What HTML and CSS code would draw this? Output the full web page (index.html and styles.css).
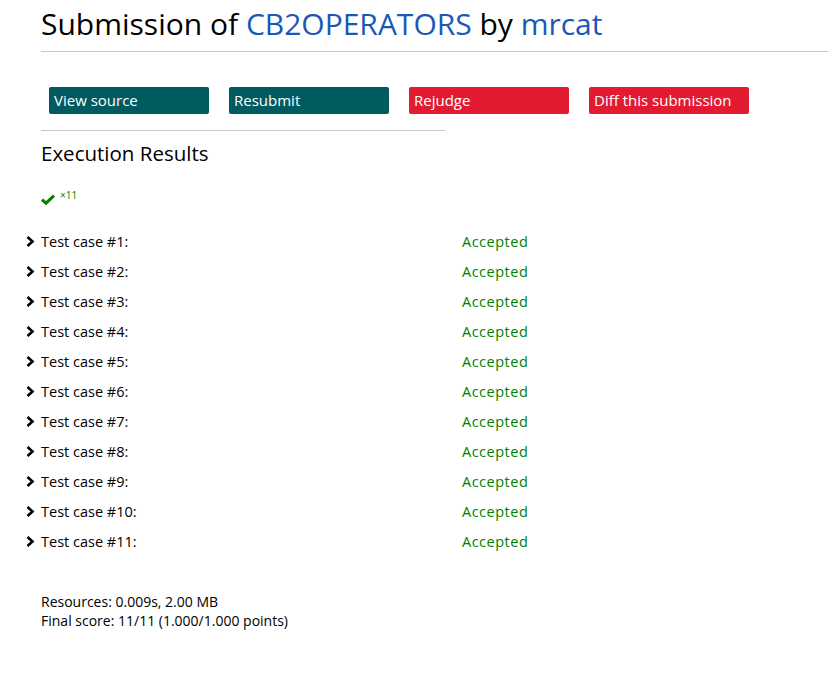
FILE: index.html
```html
<!DOCTYPE html>
<html>
<head>
<meta charset="utf-8">
<link rel="stylesheet" href="styles.css">
</head>
<body>
<div class="page">
  <h2 class="title">Submission of <a href="#">CB2OPERATORS</a> by <a href="#">mrcat</a></h2>
  <hr class="rule-full">
  <div class="content">
    <div class="actions">
      <a class="btn teal" href="#">View source</a>
      <a class="btn teal" href="#">Resubmit</a>
      <a class="btn red" href="#">Rejudge</a>
      <a class="btn red" href="#">Diff this submission</a>
    </div>
    <hr class="rule-half">
    <h3 class="exec">Execution Results</h3>
    <div class="summary">
      <svg class="check" width="14" height="11" viewBox="0 0 14 11"><path d="M1 5.6 L5 9.2 L13 1.6" fill="none" stroke="#008000" stroke-width="3" stroke-linejoin="miter"/></svg><span class="count">×11</span>
    </div>
    <div class="cases">
      <div class="case"><span class="chev"><svg width="9" height="11" viewBox="0 0 9 11"><path d="M1.5 1 L6.5 5.5 L1.5 10" fill="none" stroke="#000" stroke-width="2.6"/></svg></span><span class="label">Test case #1:</span><span class="status">Accepted</span></div>
      <div class="case"><span class="chev"><svg width="9" height="11" viewBox="0 0 9 11"><path d="M1.5 1 L6.5 5.5 L1.5 10" fill="none" stroke="#000" stroke-width="2.6"/></svg></span><span class="label">Test case #2:</span><span class="status">Accepted</span></div>
      <div class="case"><span class="chev"><svg width="9" height="11" viewBox="0 0 9 11"><path d="M1.5 1 L6.5 5.5 L1.5 10" fill="none" stroke="#000" stroke-width="2.6"/></svg></span><span class="label">Test case #3:</span><span class="status">Accepted</span></div>
      <div class="case"><span class="chev"><svg width="9" height="11" viewBox="0 0 9 11"><path d="M1.5 1 L6.5 5.5 L1.5 10" fill="none" stroke="#000" stroke-width="2.6"/></svg></span><span class="label">Test case #4:</span><span class="status">Accepted</span></div>
      <div class="case"><span class="chev"><svg width="9" height="11" viewBox="0 0 9 11"><path d="M1.5 1 L6.5 5.5 L1.5 10" fill="none" stroke="#000" stroke-width="2.6"/></svg></span><span class="label">Test case #5:</span><span class="status">Accepted</span></div>
      <div class="case"><span class="chev"><svg width="9" height="11" viewBox="0 0 9 11"><path d="M1.5 1 L6.5 5.5 L1.5 10" fill="none" stroke="#000" stroke-width="2.6"/></svg></span><span class="label">Test case #6:</span><span class="status">Accepted</span></div>
      <div class="case"><span class="chev"><svg width="9" height="11" viewBox="0 0 9 11"><path d="M1.5 1 L6.5 5.5 L1.5 10" fill="none" stroke="#000" stroke-width="2.6"/></svg></span><span class="label">Test case #7:</span><span class="status">Accepted</span></div>
      <div class="case"><span class="chev"><svg width="9" height="11" viewBox="0 0 9 11"><path d="M1.5 1 L6.5 5.5 L1.5 10" fill="none" stroke="#000" stroke-width="2.6"/></svg></span><span class="label">Test case #8:</span><span class="status">Accepted</span></div>
      <div class="case"><span class="chev"><svg width="9" height="11" viewBox="0 0 9 11"><path d="M1.5 1 L6.5 5.5 L1.5 10" fill="none" stroke="#000" stroke-width="2.6"/></svg></span><span class="label">Test case #9:</span><span class="status">Accepted</span></div>
      <div class="case"><span class="chev"><svg width="9" height="11" viewBox="0 0 9 11"><path d="M1.5 1 L6.5 5.5 L1.5 10" fill="none" stroke="#000" stroke-width="2.6"/></svg></span><span class="label">Test case #10:</span><span class="status">Accepted</span></div>
      <div class="case"><span class="chev"><svg width="9" height="11" viewBox="0 0 9 11"><path d="M1.5 1 L6.5 5.5 L1.5 10" fill="none" stroke="#000" stroke-width="2.6"/></svg></span><span class="label">Test case #11:</span><span class="status">Accepted</span></div>
    </div>
    <div class="resources">
      <div>Resources: 0.009s, 2.00 MB</div>
      <div>Final score: 11/11 (1.000/1.000 points)</div>
    </div>
  </div>
</div>
</body>
</html>
```

FILE: styles.css
```css
html, body {
  margin: 0;
  padding: 0;
  background: #fff;
}
body {
  font-family: "Open Sans", "Noto Sans", sans-serif;
  color: #000;
}
.page {
  padding-left: 41px;
}
.title {
  box-sizing: border-box;
  margin: 0;
  padding-top: 4px;
  height: 51px;
  font-size: 30px;
  font-weight: 400;
  line-height: 40px;
  white-space: nowrap;
}
.title a {
  color: #1958b7;
  text-decoration: none;
}
.rule-full {
  margin: 0;
  border: 0;
  border-top: 1px solid #c8c8c8;
}
.content {
  padding-top: 35px;
}
.actions {
  display: flex;
  gap: 20px;
  padding-left: 8px;
}
.btn {
  display: block;
  width: 155px;
  height: 27px;
  line-height: 26px;
  padding-left: 5px;
  border-radius: 2px;
  color: #fff;
  text-decoration: none;
  font-size: 15px;
  font-weight: 500;
}
.teal { background: #005b60; }
.red { background: #e31b30; }
.rule-half {
  margin: 16px 0 0 0;
  width: 404px;
  border: 0;
  border-top: 1px solid #c8c8c8;
}
.exec {
  margin: 10px 0 0 0;
  font-size: 20.5px;
  font-weight: 400;
  line-height: 24px;
}
.summary {
  margin-top: 22px;
  height: 20px;
  display: flex;
  align-items: flex-start;
}
.check {
  margin-top: 7px;
}
.count {
  color: #008000;
  font-size: 10px;
  line-height: 12px;
  margin-left: 5px;
  margin-top: 2px;
}
.cases {
  margin-top: 19px;
  margin-left: -15px;
}
.case {
  display: flex;
  align-items: center;
  height: 30px;
  font-size: 14.5px;
}
.chev {
  width: 15px;
  display: flex;
  align-items: center;
}
.label {
  width: 421px;
}
.status {
  color: #008000;
  letter-spacing: 0.5px;
}
.resources {
  margin-top: 36px;
  font-size: 14px;
  line-height: 19px;
}
```
